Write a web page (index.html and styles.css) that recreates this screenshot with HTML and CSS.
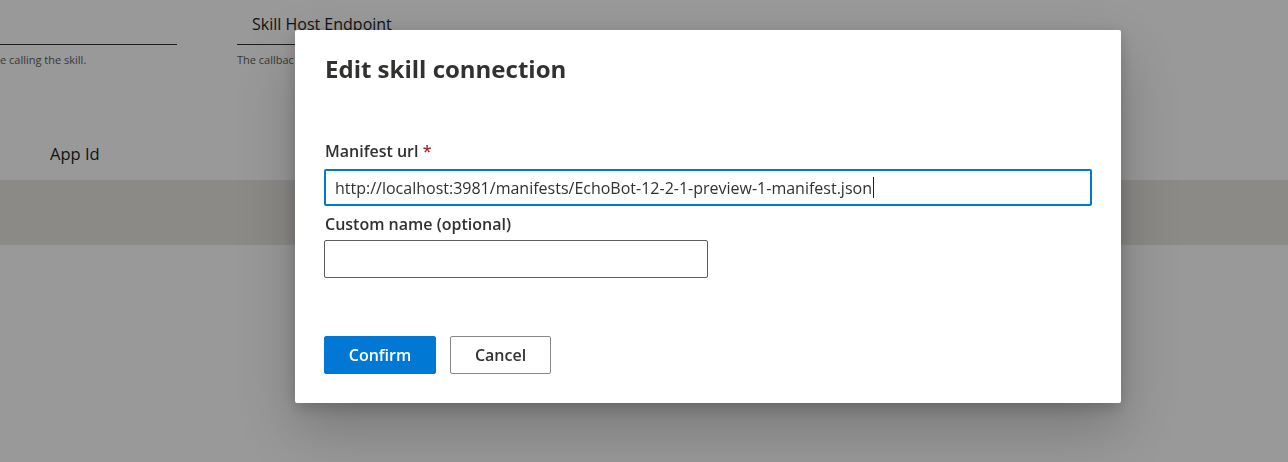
FILE: index.html
```html
<!DOCTYPE html>
<html lang="en">
<head>
<meta charset="utf-8">
<title>Edit skill connection</title>
<link rel="stylesheet" href="styles.css">
</head>
<body>
<div class="page">
  <div class="fields">
    <div class="field field-a">
      <div class="field-label">&nbsp;</div>
      <div class="field-line"></div>
      <div class="field-desc">e calling the skill.</div>
    </div>
    <div class="field field-b">
      <div class="field-label">Skill Host Endpoint</div>
      <div class="field-line"></div>
      <div class="field-desc">The callbac</div>
    </div>
  </div>
  <div class="table-head">App Id</div>
  <div class="table-band"></div>
</div>
<div class="overlay"></div>
<div class="dialog" role="dialog">
  <h1 class="dialog-title">Edit skill connection</h1>
  <div class="form">
    <label class="label">Manifest url <span class="req">*</span></label>
    <div class="input input-focused"><span class="value">http://localhost:3981/manifests/EchoBot-12-2-1-preview-1-manifest.json</span><span class="caret"></span></div>
    <label class="label label-second">Custom name (optional)</label>
    <div class="input input-half"></div>
  </div>
  <div class="footer">
    <button class="btn btn-primary">Confirm</button>
    <button class="btn btn-default">Cancel</button>
  </div>
</div>
</body>
</html>
```
FILE: styles.css
```css
* { box-sizing: border-box; }
html, body {
  margin: 0;
  padding: 0;
  width: 1288px;
  height: 462px;
  overflow: hidden;
  background: #ffffff;
  font-family: "Open Sans", "Noto Sans", sans-serif;
  color: #323130;
}
.page {
  width: 1288px;
  height: 462px;
}
.fields {
  display: flex;
  gap: 60px;
  padding-top: 12px;
}
.field-a { width: 177px; }
.field-b { width: 300px; }
.field-label {
  font-size: 16px;
  line-height: 24px;
  height: 32px;
  padding-left: 15px;
  color: #201f1e;
}
.field-line {
  height: 1px;
  background: #323130;
}
.field-desc {
  font-size: 11px;
  line-height: 16px;
  padding-top: 7px;
  color: #605e5c;
  white-space: nowrap;
}
.table-head {
  margin-top: 74px;
  padding-left: 50px;
  font-size: 16.5px;
  line-height: 24px;
  height: 38px;
  color: #201f1e;
}
.table-band {
  height: 65px;
  background: #e8e6e2;
}
.overlay {
  position: fixed;
  inset: 0;
  background: rgba(0, 0, 0, 0.4);
}
.dialog {
  position: absolute;
  left: 295px;
  top: 30px;
  width: 826px;
  height: 373px;
  background: #ffffff;
  border-radius: 2px;
  padding: 23px 29px 29px;
  box-shadow: 0 25.6px 57.6px 0 rgba(0, 0, 0, 0.22), 0 4.8px 14.4px 0 rgba(0, 0, 0, 0.18);
  display: flex;
  flex-direction: column;
}
.dialog-title {
  margin: 0;
  padding-left: 1px;
  font-size: 24px;
  line-height: 32px;
  font-weight: 700;
  color: #323130;
}
.form {
  margin-top: 50px;
  display: flex;
  flex-direction: column;
}
.label {
  display: block;
  font-size: 16px;
  line-height: 23px;
  padding: 5px 0 6px 1px;
  font-weight: 600;
  color: #323130;
}
.label-second {
  padding-top: 7px;
  padding-bottom: 4px;
}
.req { color: #a4262c; }
.input {
  width: 768px;
  height: 37px;
  border: 1px solid #605e5c;
  border-radius: 2px;
  display: flex;
  align-items: center;
  padding: 0 10px;
  font-size: 16px;
  color: #323130;
  white-space: nowrap;
}
.input-focused {
  border: 2px solid #0078d4;
  padding: 0 9px;
}
.input-half { width: 384px; height: 38px; }
.caret {
  display: inline-block;
  width: 1px;
  height: 21px;
  background: #201f1e;
  margin-left: 1px;
}
.footer {
  margin-top: auto;
  display: flex;
  gap: 14px;
}
.btn {
  height: 38px;
  border-radius: 2px;
  font-family: inherit;
  font-size: 16px;
  font-weight: 600;
  padding: 0 20px;
  cursor: pointer;
}
.btn-primary {
  width: 112px;
  background: #0078d4;
  border: 1px solid #0078d4;
  color: #ffffff;
}
.btn-default {
  width: 101px;
  background: #ffffff;
  border: 1px solid #8a8886;
  color: #323130;
}
```
